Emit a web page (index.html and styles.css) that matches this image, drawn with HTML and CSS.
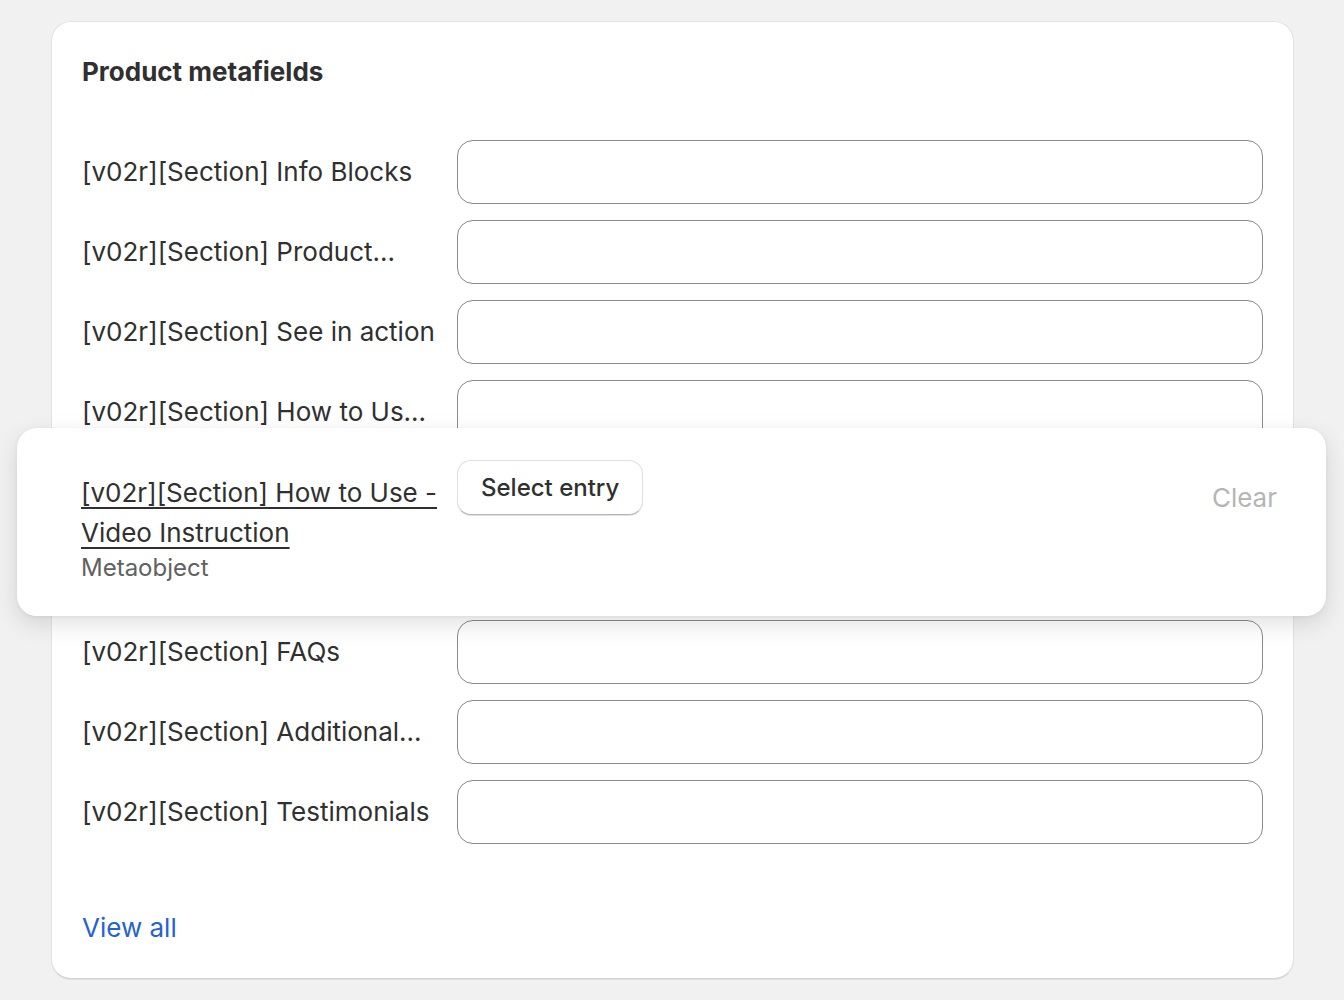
FILE: index.html
```html
<!DOCTYPE html>
<html lang="en">
<head>
    <meta charset="UTF-8">
    <meta name="viewport" content="width=device-width, initial-scale=1.0">
    <title>Product metafields</title>
    <link rel="stylesheet" href="styles.css">
</head>
<body>
    <div class="page">
        <section class="card">
            <h2 class="card-title">Product metafields</h2>

            <div class="field-list">
                <div class="field-row">
                    <div class="field-label">[v02r][Section] Info Blocks</div>
                    <div class="field-input"></div>
                </div>
                <div class="field-row">
                    <div class="field-label">[v02r][Section] Product...</div>
                    <div class="field-input"></div>
                </div>
                <div class="field-row">
                    <div class="field-label">[v02r][Section] See in action</div>
                    <div class="field-input"></div>
                </div>
                <div class="field-row">
                    <div class="field-label">[v02r][Section] How to Us...</div>
                    <div class="field-input"></div>
                </div>
                <!-- rows hidden under the popover -->
                <div class="field-row is-covered">
                    <div class="field-label">[v02r][Section] How to Us...</div>
                    <div class="field-input"></div>
                </div>
                <div class="field-row is-covered">
                    <div class="field-label">[v02r][Section] Reviews</div>
                    <div class="field-input"></div>
                </div>
                <div class="field-row">
                    <div class="field-label">[v02r][Section] FAQs</div>
                    <div class="field-input"></div>
                </div>
                <div class="field-row">
                    <div class="field-label">[v02r][Section] Additional...</div>
                    <div class="field-input"></div>
                </div>
                <div class="field-row">
                    <div class="field-label">[v02r][Section] Testimonials</div>
                    <div class="field-input"></div>
                </div>
            </div>

            <a class="view-all" href="#">View all</a>

            <!-- expanded field popover -->
            <div class="popover">
                <div class="popover-label">
                    <a class="popover-name" href="#">[v02r][Section] How to Use - Video Instruction</a>
                    <div class="popover-type">Metaobject</div>
                </div>
                <div class="popover-value">
                    <button class="select-btn">Select entry</button>
                </div>
                <span class="clear">Clear</span>
            </div>
        </section>
    </div>
</body>
</html>
```

FILE: styles.css
```css
body {
    margin: 0;
    background: #f1f1f1;
    font-family: 'Inter', 'Noto Sans', sans-serif;
    color: #303030;
}

.page {
    padding: 21px 50px 20px 51px;
}

.card {
    position: relative;
    background: #ffffff;
    border: 1px solid #e3e3e3;
    border-bottom-color: #d4d4d4;
    border-radius: 20px;
    padding: 31px 30px 31px 30px;
    box-shadow: 0 1px 0 rgba(0, 0, 0, 0.07);
}

.card-title {
    margin: 0;
    font-size: 26px;
    font-weight: 650;
    line-height: 38px;
}

.field-list {
    display: flex;
    flex-direction: column;
    gap: 16px;
    margin-top: 49px;
}

.field-row {
    display: flex;
    align-items: center;
    gap: 16px;
}

.field-row.is-covered {
    visibility: hidden;
}

.field-label {
    width: 359px;
    flex-shrink: 0;
    font-size: 26px;
    line-height: 40px;
    white-space: nowrap;
}

.field-input {
    flex: 1;
    height: 62px;
    border: 1px solid #8a8a8a;
    border-radius: 16px;
}

.view-all {
    display: inline-block;
    margin-top: 65px;
    font-size: 26px;
    line-height: 38px;
    color: #2463d1;
    text-decoration: none;
}

.popover {
    position: absolute;
    left: -35px;
    right: -33px;
    top: 406px;
    display: flex;
    align-items: flex-start;
    gap: 16px;
    padding: 32px 49px 33px 64px;
    background: #ffffff;
    border-radius: 20px;
    box-shadow: 0 8px 24px rgba(0, 0, 0, 0.12), 0 1px 4px rgba(0, 0, 0, 0.06);
}

.popover-label {
    width: 360px;
    flex-shrink: 0;
    padding-top: 13px;
}

.popover-name {
    display: block;
    font-size: 26px;
    line-height: 40px;
    color: #303030;
    text-decoration: underline;
    text-underline-offset: 5px;
    text-decoration-thickness: 2px;
}

.popover-type {
    font-size: 24px;
    line-height: 30px;
    color: #616161;
}

.popover-value {
    flex: 1;
}

.select-btn {
    font-family: inherit;
    font-size: 24px;
    font-weight: 550;
    color: #303030;
    background: #ffffff;
    border: 1px solid #e0e0e0;
    border-bottom-color: #b5b5b5;
    border-radius: 14px;
    padding: 0 23px;
    height: 55px;
    box-shadow: 0 1px 0 rgba(0, 0, 0, 0.12);
    cursor: pointer;
}

.clear {
    font-size: 26px;
    line-height: 40px;
    color: #b5b5b5;
    margin-top: 18px;
}
```
